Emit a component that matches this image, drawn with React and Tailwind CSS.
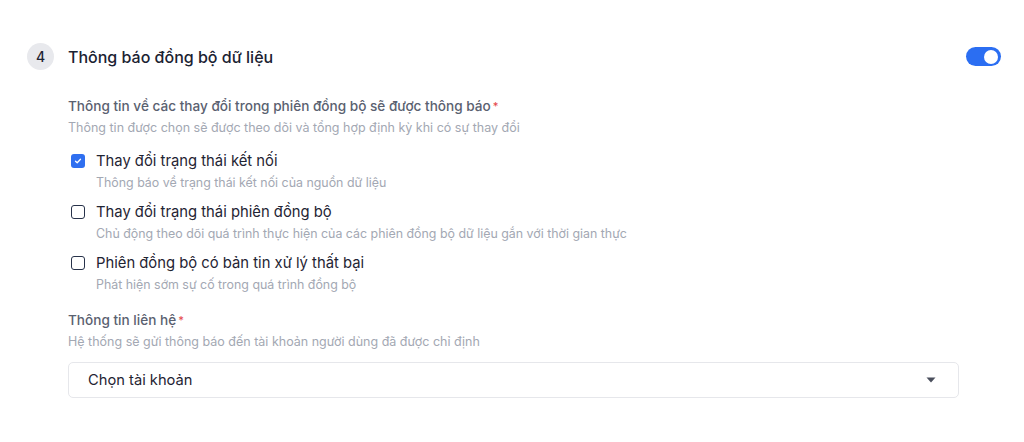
import React, { useState } from "react";

// Notification options for the sync session
const OPTIONS = [
  {
    id: "connection",
    label: "Thay đổi trạng thái kết nối",
    desc: "Thông báo về trạng thái kết nối của nguồn dữ liệu",
  },
  {
    id: "session",
    label: "Thay đổi trạng thái phiên đồng bộ",
    desc: "Chủ động theo dõi quá trình thực hiện của các phiên đồng bộ dữ liệu gắn với thời gian thực",
  },
  {
    id: "failed",
    label: "Phiên đồng bộ có bản tin xử lý thất bại",
    desc: "Phát hiện sớm sự cố trong quá trình đồng bộ",
  },
];

const Checkbox = ({ checked, onChange }) => (
  <button
    type="button"
    onClick={onChange}
    className={`w-[14px] h-[14px] rounded-[3px] flex items-center justify-center shrink-0 ${
      checked ? "bg-[#2f6ff0]" : "border-[1.5px] border-[#27324a] bg-white"
    }`}
  >
    {checked && (
      <svg width="8" height="8" viewBox="0 0 8 8" fill="none">
        <path
          d="M1.5 4.2L3.2 5.8L6.5 2.3"
          stroke="white"
          strokeWidth="1.3"
          strokeLinecap="round"
          strokeLinejoin="round"
        />
      </svg>
    )}
  </button>
);

const Toggle = ({ on, onChange }) => (
  <button
    type="button"
    onClick={onChange}
    className={`w-[35px] h-[19px] rounded-full flex items-center px-[3px] ${
      on ? "bg-[#2b6ef2] justify-end" : "bg-gray-300 justify-start"
    }`}
  >
    <span className="w-[14px] h-[14px] rounded-full bg-white block" />
  </button>
);

const App = () => {
  const [enabled, setEnabled] = useState(true);
  const [selected, setSelected] = useState({ connection: true });

  const toggle = (id) => setSelected((s) => ({ ...s, [id]: !s[id] }));

  return (
    <div
      className="w-full h-[442px] bg-white pl-[27px] pr-[23px] pt-[43px]"
      style={{ fontFamily: "Inter, 'Noto Sans', sans-serif" }}
    >
      {/* Header */}
      <div className="flex items-center justify-between">
        <div className="flex items-center gap-[14px]">
          <div className="w-[27px] h-[27px] rounded-full bg-[#e8e9ed] flex items-center justify-center text-[14px] font-medium text-[#1e2433]">
            4
          </div>
          <span className="text-[16px] font-medium text-[#1b2232]">
            Thông báo đồng bộ dữ liệu
          </span>
        </div>
        <Toggle on={enabled} onChange={() => setEnabled(!enabled)} />
      </div>

      <div className="ml-[41px] mr-[42px] mt-[25px]">
        <div className="text-[13.6px] leading-[22px] font-medium text-[#5a6170]">
          Thông tin về các thay đổi trong phiên đồng bộ sẽ được thông báo
          <span className="text-[#e5484d] align-top text-[11px] ml-[2px]">*</span>
        </div>
        <div className="text-[12.5px] leading-[22px] text-[#a3a8b3]">
          Thông tin được chọn sẽ được theo dõi và tổng hợp định kỳ khi có sự thay đổi
        </div>

        <div className="mt-[11px] flex flex-col gap-[7px]">
          {OPTIONS.map((opt) => (
            <div key={opt.id}>
              <div className="flex items-center gap-[11px] pl-[3px]">
                <Checkbox
                  checked={!!selected[opt.id]}
                  onChange={() => toggle(opt.id)}
                />
                <span className="text-[14.8px] leading-[22px] text-[#1f2433]">
                  {opt.label}
                </span>
              </div>
              <div className="pl-[28px] text-[12.4px] leading-[22px] text-[#a3a8b3]">
                {opt.desc}
              </div>
            </div>
          ))}
        </div>

        <div className="mt-[13px] text-[13.6px] leading-[22px] font-medium text-[#5a6170]">
          Thông tin liên hệ
          <span className="text-[#e5484d] align-top text-[11px] ml-[2px]">*</span>
        </div>
        <div className="text-[12.5px] leading-[22px] text-[#a3a8b3]">
          Hệ thống sẽ gửi thông báo đến tài khoản người dùng đã được chỉ định
        </div>

        <button
          type="button"
          className="mt-[9px] w-full h-[36px] border border-[#e6e7eb] rounded-[5px] flex items-center justify-between pl-[19px] pr-[22px]"
        >
          <span className="text-[14.7px] text-[#1f2433]">Chọn tài khoản</span>
          <svg width="10" height="6" viewBox="0 0 10 6">
            <path d="M0.5 0.5H9.5L5 5.5Z" fill="#4a4f5c" />
          </svg>
        </button>
      </div>
    </div>
  );
};

export default App;
